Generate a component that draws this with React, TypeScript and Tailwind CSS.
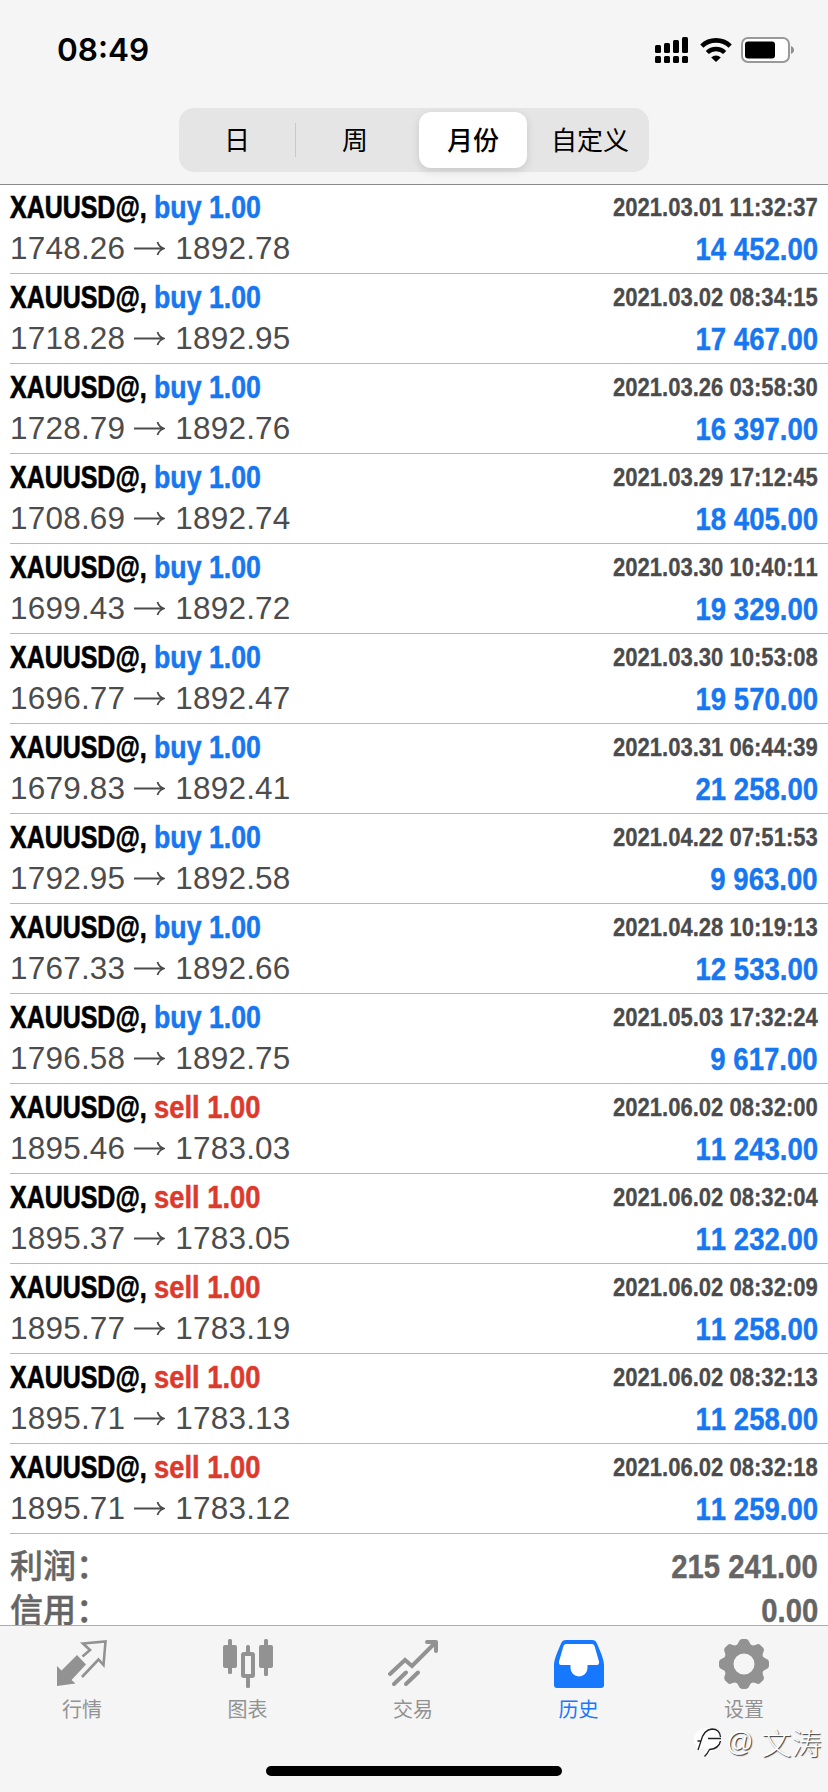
type Deal = {
  side: "buy" | "sell";
  open: string;
  close: string;
  time: string;
  profit: string;
};

const deals: Deal[] = [
  { side: "buy", open: "1748.26", close: "1892.78", time: "2021.03.01 11:32:37", profit: "14 452.00" },
  { side: "buy", open: "1718.28", close: "1892.95", time: "2021.03.02 08:34:15", profit: "17 467.00" },
  { side: "buy", open: "1728.79", close: "1892.76", time: "2021.03.26 03:58:30", profit: "16 397.00" },
  { side: "buy", open: "1708.69", close: "1892.74", time: "2021.03.29 17:12:45", profit: "18 405.00" },
  { side: "buy", open: "1699.43", close: "1892.72", time: "2021.03.30 10:40:11", profit: "19 329.00" },
  { side: "buy", open: "1696.77", close: "1892.47", time: "2021.03.30 10:53:08", profit: "19 570.00" },
  { side: "buy", open: "1679.83", close: "1892.41", time: "2021.03.31 06:44:39", profit: "21 258.00" },
  { side: "buy", open: "1792.95", close: "1892.58", time: "2021.04.22 07:51:53", profit: "9 963.00" },
  { side: "buy", open: "1767.33", close: "1892.66", time: "2021.04.28 10:19:13", profit: "12 533.00" },
  { side: "buy", open: "1796.58", close: "1892.75", time: "2021.05.03 17:32:24", profit: "9 617.00" },
  { side: "sell", open: "1895.46", close: "1783.03", time: "2021.06.02 08:32:00", profit: "11 243.00" },
  { side: "sell", open: "1895.37", close: "1783.05", time: "2021.06.02 08:32:04", profit: "11 232.00" },
  { side: "sell", open: "1895.77", close: "1783.19", time: "2021.06.02 08:32:09", profit: "11 258.00" },
  { side: "sell", open: "1895.71", close: "1783.13", time: "2021.06.02 08:32:13", profit: "11 258.00" },
  { side: "sell", open: "1895.71", close: "1783.12", time: "2021.06.02 08:32:18", profit: "11 259.00" },
];

const StatusBar = () => (
  <div className="flex h-[98px] items-center justify-between pl-[57px] pr-[33px] pt-[2px]">
    <span className="font-['Inter',sans-serif] text-[31.5px] font-semibold leading-none">08:49</span>
    <div className="flex items-center">
      <svg width="34" height="26" viewBox="0 0 34 26">
        <rect x="0" y="8" width="6" height="8" rx="1.5" />
        <rect x="9" y="6" width="6" height="10" rx="1.5" />
        <rect x="18" y="3" width="6" height="13" rx="1.5" />
        <rect x="27" y="0" width="6" height="16" rx="1.5" />
        <rect x="0" y="19" width="6" height="7" rx="1.5" />
        <rect x="9" y="19" width="6" height="7" rx="1.5" />
        <rect x="18" y="19" width="6" height="7" rx="1.5" />
        <rect x="27" y="19" width="6" height="7" rx="1.5" />
      </svg>
      <svg className="ml-[11px]" width="32" height="24" viewBox="0 0 32 24">
        <path d="M1.8 8.1a20.6 20.6 0 0 1 28.4 0" fill="none" stroke="#000" strokeWidth="4.6" />
        <path d="M7.3 14.5a12.6 12.6 0 0 1 17.4 0" fill="none" stroke="#000" strokeWidth="4.4" />
        <path d="M16 24l-4.800-4.600a7 7 0 0 1 9.600 0z" />
      </svg>
      <svg className="ml-[9px]" width="54" height="26" viewBox="0 0 54 26">
        <rect x="1" y="1" width="47" height="24" rx="6" fill="#fff" stroke="#999" strokeWidth="2" />
        <rect x="4" y="4.5" width="30" height="17" rx="3" />
        <path d="M50 9c4 1.5 4 6.500 0 8z" fill="#8e8e8e" />
      </svg>
    </div>
  </div>
);

const PeriodTabs = () => (
  <div className="mx-auto mt-[10px] flex h-[64px] w-[470px] items-center rounded-[15px] bg-[#e5e5e5] font-['Noto_Sans_CJK_SC',sans-serif] text-[26px] leading-none">
    <div className="w-[116px] pb-[3px] text-center">日</div>
    <div className="h-[34px] w-px bg-[#c9c9c9]" />
    <div className="w-[118px] pb-[3px] text-center">周</div>
    <div className="ml-[5px] flex h-[56px] w-[108px] items-center justify-center rounded-[12px] bg-white pb-[3px] font-medium shadow-[0_3px_8px_rgba(0,0,0,0.13)]">
      月份
    </div>
    <div className="w-[122px] pb-[3px] pl-[4px] text-center">自定义</div>
  </div>
);

const Arrow = () => (
  <svg className="ml-[9px] mr-[10px]" width="31" height="20" viewBox="0 0 31 20" fill="none" stroke="#4c4c4c" strokeWidth="1.8">
    <path d="M0 9.500h30M23.500 3c1 3.500 3.500 5.500 6.500 6.500c-3 1-5.500 3-6.500 6.500" />
  </svg>
);

const DealRow = ({ deal }: { deal: Deal }) => (
  <li className="ml-[10px] h-[90px] border-b border-[#b8b8b8] pr-[10px] [font-kerning:none]">
    <div className="flex h-[45px] items-center justify-between font-bold">
      <div className="flex text-[32px] leading-none">
        <span className="w-[144px] origin-left scale-x-[0.78] whitespace-nowrap [-webkit-text-stroke:0.7px_currentColor]">
          XAUUSD@,
        </span>
        <span
          className={`origin-left whitespace-nowrap [-webkit-text-stroke:0.5px_currentColor] ${deal.side === "buy" ? "scale-x-[0.835] text-[#1677f0]" : "scale-x-[0.855] text-[#dd3a2e]"}`}
        >
          {deal.side} 1.00
        </span>
      </div>
      <span className="origin-right scale-x-[0.865] pt-[2px] text-[25.5px] leading-none text-[#4b4b4d] [-webkit-text-stroke:0.3px_currentColor]">
        {deal.time}
      </span>
    </div>
    <div className="flex h-[40px] items-center justify-between text-[31.5px] leading-none">
      <div className="flex items-center tracking-[0.2px] text-[#4c4c4c]">
        <span>{deal.open}</span>
        <Arrow />
        <span>{deal.close}</span>
      </div>
      <span className="origin-right scale-x-[0.875] pt-px font-bold text-[#1677f0] [-webkit-text-stroke:0.4px_currentColor]">
        {deal.profit}
      </span>
    </div>
  </li>
);

const SummaryRow = ({ label, value }: { label: string; value: string }) => (
  <div className="flex h-[44px] items-center justify-between leading-none">
    <span className="pb-[5px] font-['Noto_Sans_CJK_SC',sans-serif] text-[33px] font-medium [-webkit-text-stroke:0.4px_currentColor]">
      {label}
    </span>
    <span className="origin-right scale-x-[0.9] text-[32.5px] font-bold [font-kerning:none] [-webkit-text-stroke:0.4px_currentColor]">
      {value}
    </span>
  </div>
);

const QuotesIcon = () => (
  <svg width="50" height="50" viewBox="0 0 50 50">
    <path d="M0 27l4.500 4.500L20 16l9 9.500L14.500 41l4 3.500L0 47z" fill="#929292" />
    <path d="M25.500 17.500l7.500-6.500-7-6.500L48.500 2.500 46.500 26l-5-5.500L25 38" fill="none" stroke="#929292" strokeWidth="2.600" />
  </svg>
);

const ChartIcon = () => (
  <svg width="50" height="50" viewBox="0 0 50 50" fill="#929292">
    <rect x="5" y="0" width="4" height="35" rx="1.500" />
    <rect x="0" y="6" width="14" height="23" rx="2" />
    <rect x="41" y="0" width="4" height="37" rx="1.500" />
    <rect x="36" y="6" width="14" height="23" rx="2" />
    <rect x="23" y="6" width="4" height="9" rx="1.500" />
    <rect x="23" y="38" width="4" height="11" rx="1.500" />
    <rect x="20" y="15" width="10" height="22" rx="1" fill="none" stroke="#929292" strokeWidth="4" />
  </svg>
);

const TradeIcon = () => (
  <svg width="50" height="50" viewBox="0 0 50 50" fill="none" stroke="#929292" strokeWidth="4" strokeLinecap="round">
    <path d="M2 35L17 21l7 6L46.500 4.500" />
    <path d="M39 3h9v9" strokeLinejoin="round" />
    <path d="M6 45L18 33.500M18 45L30 33.500" />
  </svg>
);

const HistoryIcon = () => (
  <svg width="50" height="50" viewBox="0 0 50 50">
    <path
      d="M12 1h26c2.500 0 4 1 5 3.500C46 12 50 20 50 26v20c0 2-1 3-3 3H3c-2 0-3-1-3-3V26C0 20 4 12 7 4.500 8 2 9.500 1 12 1z"
      fill="#1677ff"
    />
    <path
      d="M13 5h24c2 0 3 .6 3.600 2.200L45 22.500c.4 2-.5 3.500-2 3.500H33.500v3a8.500 8.500 0 0 1-17 0v-3H7c-1.500 0-2.400-1.500-2-3.500L9.400 7.200C10 5.600 11 5 13 5z"
      fill="#fff"
    />
  </svg>
);

const SettingsIcon = () => (
  <svg width="50" height="50" viewBox="0 0 50 50" fill="#929292">
    <circle cx="25" cy="25" r="15.500" fill="none" stroke="#929292" strokeWidth="10" />
    {[0, 45, 90, 135, 180, 225, 270, 315].map((angle) => (
      <path
        key={angle}
        d="M16.500 9L19.800 2.800Q20.800 0 23 0h4Q29.200 0 30.200 2.800L33.500 9z"
        transform={`rotate(${angle} 25 25)`}
      />
    ))}
  </svg>
);

const navItems = [
  { label: "行情", icon: <QuotesIcon /> },
  { label: "图表", icon: <ChartIcon /> },
  { label: "交易", icon: <TradeIcon /> },
  { label: "历史", icon: <HistoryIcon />, active: true },
  { label: "设置", icon: <SettingsIcon /> },
];

const BottomNav = () => (
  <nav className="h-[167px] border-t border-[#adadad] bg-[#f5f5f5] pt-[13px]">
    <ul className="flex justify-between pl-[42px] pr-[44px]">
      {navItems.map((item) => (
        <li key={item.label} className="flex w-[80px] flex-col items-center">
          {item.icon}
          <span
            className={`mt-[8px] font-['Noto_Sans_CJK_SC',sans-serif] text-[20px] leading-[24px] ${item.active ? "text-[#1677ff]" : "text-[#929292]"}`}
          >
            {item.label}
          </span>
        </li>
      ))}
    </ul>
  </nav>
);

const Watermark = () => (
  <div className="absolute left-[694px] top-[1723px] flex h-[38px] items-center whitespace-nowrap text-white [text-shadow:1px_1px_1px_#333]">
    <svg width="30" height="34" viewBox="0 0 30 34" fill="none">
      <path d="M13 3C5 3 0 9 0 15c0 4 2 7 5 9l5-2 1 7c9-2 16-6 16-14C27 8 21 3 13 3z" fill="#fff" />
      <path
        d="M4 25l3-9H3.500M7 16C9 8 13 4.500 18 4c5 0 8 3 8.500 8M14 13.500h13M26.500 16c-1 5-5 8-11 8.500-1 2-2 4-5 7"
        stroke="#222"
        strokeWidth="1.300"
      />
    </svg>
    <span className="ml-[2px] text-[27px] leading-none">@</span>
    <span className="ml-[8px] pb-[2px] font-['Noto_Sans_CJK_SC',sans-serif] text-[30px] font-light leading-none">文涛</span>
  </div>
);

export default function App() {
  return (
    <div className="relative flex h-[1792px] w-[828px] flex-col overflow-hidden bg-white font-['Liberation_Sans',Arial,sans-serif] text-black">
      <header className="h-[185px] shrink-0 border-b border-[#8a8a8a] bg-[#f5f5f5]">
        <StatusBar />
        <PeriodTabs />
      </header>

      <main className="-mt-px h-[1441px] shrink-0 overflow-hidden">
        <ul>
          {deals.map((deal) => (
            <DealRow key={deal.time} deal={deal} />
          ))}
        </ul>
        <div className="px-[10px] pt-[11px] text-[#656565]">
          <SummaryRow label="利润：" value="215 241.00" />
          <SummaryRow label="信用：" value="0.00" />
        </div>
      </main>

      <BottomNav />
      <Watermark />

      {/* Home indicator */}
      <div className="absolute bottom-[16px] left-[266px] h-[10px] w-[296px] rounded-full bg-black" />
    </div>
  );
}
